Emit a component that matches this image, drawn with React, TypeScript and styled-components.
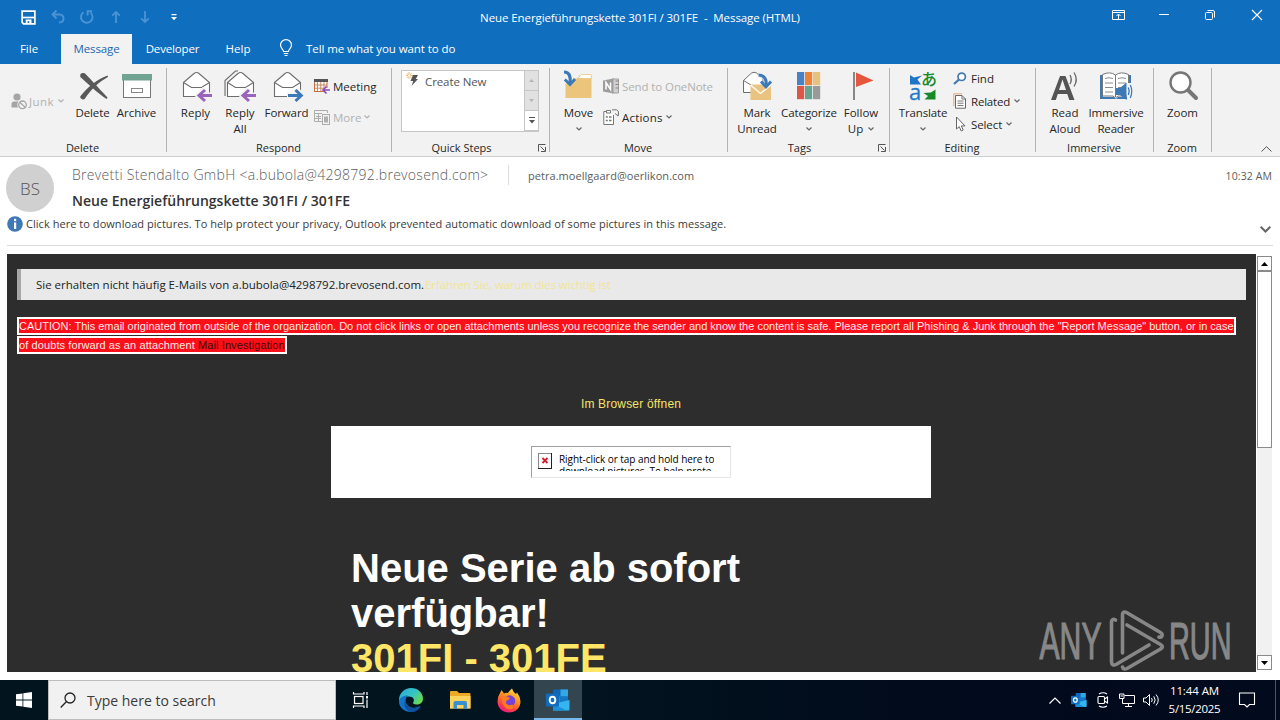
import React from "react";
import styled, { createGlobalStyle } from "styled-components";

const GlobalStyle = createGlobalStyle`
  * { box-sizing: border-box; }
  body {
    margin: 0;
    width: 1280px;
    height: 720px;
    overflow: hidden;
    background: #fff;
    font-family: "Open Sans", "Noto Sans", sans-serif;
  }
  svg { display: block; flex: none; overflow: visible; }
  p, h1, h2 { margin: 0; }
`;

const Screen = styled.div`
  width: 1280px;
  height: 720px;
  display: flex;
  flex-direction: column;
  overflow: hidden;
  background: #fff;
`;

// fs = font size, ls = letter spacing
const Text = styled.span<{ $fs?: number; $ls?: number; $color?: string; $weight?: number }>`
  font-size: ${(p) => p.$fs ?? 11.5}px;
  letter-spacing: ${(p) => p.$ls ?? 0}px;
  color: ${(p) => p.$color ?? "inherit"};
  font-weight: ${(p) => p.$weight ?? 400};
  white-space: pre;
`;

/* ---------- title bar + tabs ---------- */

const TitleBar = styled.header`
  height: 34px;
  display: grid;
  grid-template-columns: 1fr auto 1fr;
  align-items: center;
  background: #106ebe;
  color: #fff;
`;

const QuickAccess = styled.div`
  display: flex;
  padding-left: 14px;
`;

const WindowButtons = styled.div`
  display: flex;
  justify-content: flex-end;
  padding-bottom: 4px;
`;

const Cell = styled.div<{ $w: number }>`
  width: ${(p) => p.$w}px;
  display: flex;
  align-items: center;
  justify-content: center;
`;

const Tabs = styled.nav`
  height: 30px;
  display: flex;
  align-items: stretch;
  background: #106ebe;
  color: #fff;
`;

const Tab = styled.div<{ $w: number; $active?: boolean; $gap?: number }>`
  width: ${(p) => p.$w}px;
  margin-right: ${(p) => p.$gap ?? 0}px;
  padding-bottom: 2px;
  display: flex;
  align-items: center;
  justify-content: center;
  background: ${(p) => (p.$active ? "#f2f2f2" : "transparent")};
  color: ${(p) => (p.$active ? "#1b67b3" : "#fff")};
`;

const TellMe = styled.div`
  display: flex;
  align-items: center;
  gap: 13px;
  padding: 0 0 2px 16px;
`;

/* ---------- ribbon ---------- */

const Ribbon = styled.section`
  height: 93px;
  display: flex;
  background: #f2f2f2;
  border-bottom: 1px solid #cfcfcf;
  color: #262626;
`;

const Group = styled.div<{ $w: number }>`
  width: ${(p) => p.$w}px;
  height: 92px;
  display: flex;
  flex-direction: column;
  padding-top: 6px;
  background: linear-gradient(#b4b4b4, #b4b4b4) right 4px / 1px 84px no-repeat;
`;

const GroupBody = styled.div<{ $left: number }>`
  height: 70px;
  display: flex;
  padding-left: ${(p) => p.$left}px;
`;

const GroupFooter = styled.div`
  height: 16px;
  display: flex;
  align-items: center;
  padding-right: 2px;
  text-align: center;
  line-height: 16px;
`;

const FooterLabel = styled.div`
  flex: 1;
  display: flex;
  justify-content: center;
`;

const LauncherBox = styled.div`
  width: 17px;
  padding-left: 7px;
`;

const BigButton = styled.div<{ $w: number }>`
  width: ${(p) => p.$w}px;
  display: flex;
  flex-direction: column;
  align-items: center;
  line-height: 16px;
  text-align: center;
`;

const IconBox = styled.div`
  height: 35px;
`;

const LabelLine = styled.div`
  height: 16px;
  display: flex;
  align-items: center;
  gap: 5px;
`;

const Stack = styled.div<{ $left: number; $top: number; $step: number }>`
  display: grid;
  grid-auto-rows: ${(p) => p.$step}px;
  align-content: start;
  padding: ${(p) => `${p.$top}px 0 0 ${p.$left}px`};
`;

const SmallButton = styled.div<{ $gap?: number; $w?: number; $off?: boolean }>`
  width: ${(p) => (p.$w ? `${p.$w}px` : "auto")};
  height: 16px;
  display: flex;
  align-items: center;
  gap: ${(p) => p.$gap ?? 3}px;
  color: ${(p) => (p.$off ? "#b1b1b1" : "#262626")};
`;

const Steps = styled.div`
  width: 138px;
  height: 62px;
  display: flex;
  background: #fff;
  border: 1px solid #c6c6c6;
`;

const StepItem = styled.div`
  flex: 1;
  display: flex;
  align-items: flex-start;
  gap: 5px;
  padding: 1px 0 0 4px;
  color: #555;
  line-height: 20px;
`;

const Spinner = styled.div`
  width: 14px;
  display: grid;
  grid-template-rows: 20px 20px 20px;
`;

const SpinnerButton = styled.div<{ $off?: boolean }>`
  display: flex;
  align-items: center;
  justify-content: center;
  background: ${(p) => (p.$off ? "#e1e1e1" : "#fff")};
  border-left: 1px solid #c6c6c6;
  border-bottom: 1px solid #c6c6c6;
`;

const Collapse = styled.div`
  flex: 1;
  display: flex;
  justify-content: flex-end;
  align-items: flex-end;
  padding: 0 8px 4px 0;
`;

/* ---------- message header ---------- */

const MessageHeader = styled.section`
  height: 89px;
  margin: 0 7px;
  border-bottom: 1px solid #dcdcdc;
`;

const HeaderTop = styled.div`
  height: 57px;
  display: flex;
`;

const Avatar = styled.div`
  width: 48px;
  height: 48px;
  margin: 7px 18px 0 -1px;
  border-radius: 50%;
  background: #d0d0d0;
  display: flex;
  align-items: center;
  justify-content: center;
  color: #555;
`;

const HeaderLines = styled.div`
  flex: 1;
`;

const SenderRow = styled.div`
  height: 20px;
  margin-top: 8px;
  display: flex;
  align-items: center;
  color: #5c5c5c;
`;

const SenderName = styled.div`
  width: 437px;
  height: 20px;
  line-height: 18px;
  border-right: 1px solid #dcdcdc;
  margin-right: 19px;
`;

const Time = styled.div`
  margin-left: auto;
  padding: 1px 1px 0 0;
  display: flex;
  line-height: 18px;
`;

const Subject = styled.h2`
  height: 24px;
  line-height: 24px;
  margin-top: 4px;
  font-size: 14px;
`;

const InfoBar = styled.div`
  height: 20px;
  display: flex;
  align-items: center;
  gap: 3px;
  color: #3b3b3b;
`;

const InfoText = styled.div`
  display: flex;
  padding-bottom: 1px;
`;

const InfoChevron = styled.div`
  margin: 10px 2px 0 auto;
`;

/* ---------- message body ---------- */

const Viewer = styled.main`
  height: 418px;
  margin: 8px 7px 8px;
  display: flex;
`;

const Mail = styled.div`
  position: relative;
  width: 1249px;
  height: 418px;
  overflow: hidden;
  background: #2d2d2d;
`;

const Notice = styled.div`
  height: 31px;
  margin: 15px 10px 0;
  padding-left: 15px;
  display: flex;
  align-items: center;
  gap: 1px;
  background: #e9e9e9;
  border-left: 4px solid #a6a6a6;
  color: #222;
`;

const Caution = styled.p`
  margin: 17px 0 0 10px;
  font-family: "Liberation Sans", Arial, sans-serif;
  font-size: 11px;
`;

const CautionLine = styled.span<{ $w: number }>`
  display: block;
  width: ${(p) => p.$w}px;
  height: 18px;
  margin-bottom: 1px;
  line-height: 14px;
  background: #fb0f18;
  border: 2px solid #fff;
  color: #ffe9e9;
  white-space: nowrap;
`;

const Newsletter = styled.div`
  width: 600px;
  margin: 41px 0 0 324px;
  font-family: "Liberation Sans", Arial, sans-serif;
`;

const BrowserLink = styled.div`
  height: 31px;
  line-height: 18px;
  font-size: 12px;
  text-align: center;
  color: #f6e36a;
`;

const Banner = styled.div`
  height: 72px;
  padding-top: 20px;
  background: #fff;
`;

const BlockedImage = styled.div`
  width: 200px;
  height: 32px;
  margin: 0 auto;
  padding: 6px 0 6px 6px;
  display: flex;
  gap: 7px;
  border: 1px solid #e6e6e6;
  border-top-color: #a0a0a0;
  border-left-color: #a0a0a0;
`;

const BlockedText = styled.div`
  height: 18px;
  overflow: hidden;
  font-size: 10px;
  line-height: 12px;
  color: #000;
  font-family: "Open Sans", sans-serif;
`;

const Headline = styled.h1<{ $yellow?: boolean }>`
  padding-left: 20px;
  font-size: 40px;
  line-height: 45px;
  font-weight: 700;
  color: ${(p) => (p.$yellow ? "#ffe666" : "#fff")};
  span { display: block; }
`;

const Spacer = styled.div`
  height: 48px;
`;

const Watermark = styled.div`
  position: absolute;
  left: 1029px;
  top: 354px;
  opacity: 0.75;
`;

const ScrollBar = styled.div`
  width: 15px;
  margin-left: 1px;
  padding: 2px 0;
  display: flex;
  flex-direction: column;
`;

const ScrollArrow = styled.div`
  height: 15px;
  display: flex;
  align-items: center;
  justify-content: center;
  background: #fff;
  border: 1px solid #8a8a8a;
`;

const ScrollThumb = styled.div`
  height: 177px;
  background: #fff;
  border: 1px solid #8a8a8a;
`;

const ScrollTrack = styled.div`
  flex: 1;
  background: #f1f1f1;
`;

/* ---------- taskbar ---------- */

const Taskbar = styled.footer`
  height: 40px;
  display: flex;
  align-items: stretch;
  background: linear-gradient(90deg, #02141d 0%, #02141f 45%, #010b1c 70%, #020a1d 100%);
  color: #fff;
`;

const SearchBox = styled.div`
  width: 288px;
  display: flex;
  align-items: center;
  gap: 11px;
  padding-left: 11px;
  background: #f1f1f1;
  border: 1px solid #bdbdbd;
  color: #3a3a3a;
`;

const TaskButton = styled.div<{ $w: number; $active?: boolean }>`
  width: ${(p) => p.$w}px;
  display: flex;
  align-items: center;
  justify-content: center;
  background: ${(p) => (p.$active ? "#33454f" : "transparent")};
  border-bottom: 2px solid ${(p) => (p.$active ? "#76b9ed" : "transparent")};
  padding-top: 2px;
`;

const Tray = styled.div`
  margin-left: auto;
  display: flex;
  align-items: stretch;
`;

const Clock = styled.div`
  width: 63px;
  display: flex;
  flex-direction: column;
  align-items: center;
  padding-top: 2px;
  line-height: 18px;
`;

const DesktopEdge = styled.div`
  width: 5px;
  margin-left: 8px;
  border-left: 1px solid #4c5560;
`;

/* ---------- icons ---------- */

const Chevron = ({ color = "#666" }: { color?: string }) => (
  <svg width="6" height="4" viewBox="0 0 6 4" fill="none" stroke={color} strokeWidth="1.2">
    <path d="M.5 .5L3 3L5.5 .5" />
  </svg>
);

const Launcher = () => (
  <svg width="8" height="8" viewBox="0 0 8 8" fill="none" stroke="#555">
    <path d="M.5 7.5V.5H7.5M2.5 2.5L6.5 6.5M7.5 3V7.5H3" />
  </svg>
);

const SaveIcon = () => (
  <svg width="15" height="15" viewBox="0 0 16 16" fill="none" stroke="#fff" strokeWidth="1.8">
    <path d="M1.2 1.2H14.8V14.8H2.8L1.2 13.2Z" />
    <path d="M2 8H14" />
    <path d="M5 10.2H11.2V14H8.8V12H7V14H5Z" fill="#fff" stroke="none" />
  </svg>
);

const UndoIcon = () => (
  <svg width="16" height="16" viewBox="0 0 16 16" fill="none" stroke="#4a94d4" strokeWidth="1.9">
    <path d="M6.5 1.5L2.5 5.5L6.5 9.5M2.5 5.5H9.5C15 5.5 15 13.5 9 13.5" />
  </svg>
);

const RedoIcon = () => (
  <svg width="16" height="16" viewBox="0 0 16 16" fill="none" stroke="#4a94d4" strokeWidth="1.9">
    <path d="M4.500 3.200A5.800 5.800 0 1 0 11.500 3.600M8.600 6.500V2.200H13" />
  </svg>
);

const ArrowIcon = ({ down }: { down?: boolean }) => (
  <svg width="12" height="14" viewBox="0 0 12 14" fill="none" stroke="#4a94d4" strokeWidth="1.8">
    <path d={down ? "M6 1V12M2.2 8.3L6 12L9.8 8.3" : "M6 13V2M2.2 5.7L6 2L9.8 5.7"} />
  </svg>
);

const DeleteIcon = () => (
  <svg width="32" height="32" viewBox="0 0 32 32" fill="#595959">
    <path d="M3.3 4.2C5 2.4 7.5 2.8 9 4.4C14 9.5 19.500 15.500 30.500 27.500L29.500 29C20 22.500 10.500 13.500 3.300 7Z" />
    <path d="M30.500 5.500L31 7C22 12 15 18 8 28.600C6.500 30.500 3 29 3.200 26.500C11 17 19 10 30.500 5.500Z" />
  </svg>
);

const ArchiveIcon = () => (
  <svg width="32" height="32" viewBox="0 0 32 32">
    <rect x="2.500" y="9.500" width="27" height="18" fill="#fff" stroke="#777" />
    <rect x="1" y="4" width="30" height="6.500" fill="#70a392" />
    <rect x="10.500" y="18.500" width="11" height="4" fill="#fff" stroke="#888" />
  </svg>
);

const Envelope = () => (
  <g fill="#fff" stroke="#6d6d6d" strokeWidth="1.1">
    <path d="M3.500 12.500L14 3.500Q16.500 1.500 19 3.500L29.500 12.500V26.500H3.500Z" />
    <path d="M3.500 12.500L11.500 17.500H21.500L29.500 12.500" fill="none" />
  </g>
);

const ReplyArrow = () => (
  <g fill="none" strokeLinejoin="miter">
    <path d="M25 19L18.500 25.500L25 32M18.500 25.500H32" stroke="#f2f2f2" strokeWidth="6" />
    <path d="M25 20L19 25.500L25 31M19.500 25.500H32" stroke="#9a64be" strokeWidth="3" />
  </g>
);

const ReplyIcon = () => (
  <svg width="32" height="32" viewBox="0 0 32 32">
    <Envelope />
    <ReplyArrow />
  </svg>
);

const ReplyAllIcon = () => (
  <svg width="32" height="32" viewBox="0 0 32 32">
    <path d="M1 26V10.500L11.500 1H14" fill="none" stroke="#6d6d6d" strokeWidth="1.1" />
    <Envelope />
    <ReplyArrow />
  </svg>
);

const ForwardIcon = () => (
  <svg width="32" height="32" viewBox="0 0 32 32">
    <Envelope />
    <path d="M25 19.500L31 25.500L25 31.500M31 25.500H16" fill="none" stroke="#f2f2f2" strokeWidth="6" />
    <path d="M24.500 20L30.300 25.500L24.500 31M30 25.500H17" fill="none" stroke="#3b79b7" strokeWidth="3" />
  </svg>
);

const JunkIcon = () => (
  <svg width="17" height="17" viewBox="0 0 17 17">
    <circle cx="6" cy="4" r="3.600" fill="#a5a5a5" />
    <path d="M.5 14.500V11Q.5 8.500 3 8.500H9V14.500Z" fill="#a5a5a5" />
    <circle cx="11.500" cy="11.800" r="5.200" fill="#f2f2f2" />
    <circle cx="11.500" cy="11.800" r="3.800" fill="#f2f2f2" stroke="#a5a5a5" strokeWidth="1.300" />
    <path d="M8.800 9.200L14.200 14.400" stroke="#a5a5a5" strokeWidth="1.300" />
  </svg>
);

const MeetingIcon = () => (
  <svg width="16" height="16" viewBox="0 0 16 16" fill="none">
    <rect x=".5" y="2.500" width="12.500" height="11" fill="#fff" stroke="#c2713e" />
    <path d="M0 2.500H14" stroke="#555" strokeWidth="3" />
    <path d="M3.500 4V13M6.800 4V13M10 4V13M1 7H13M1 10.200H13" stroke="#c98860" />
    <path d="M12 8V10H16V14H12V16L8 12Z" fill="#f2f2f2" />
    <path d="M12.500 8.500L9 12L12.500 15.500M9 12H16" stroke="#8a4cb5" strokeWidth="1.700" />
  </svg>
);

const MoreIcon = () => (
  <svg width="16" height="16" viewBox="0 0 16 16" fill="none" stroke="#adadad">
    <path d="M8 12.500H.5V1.500H13.500V4M.5 4.500H8M2 7.500H7M4.500 5V12M.5 9.500H7" />
    <rect x="8.500" y="5.500" width="7" height="10" fill="#f2f2f2" />
    <rect x="10.500" y="8" width="3" height="5" fill="#b0b0b0" />
  </svg>
);

const StepIcon = () => (
  <svg width="14" height="16" viewBox="0 0 14 16">
    <path d="M3 0V7M0 3.500H7M.8 1.200L5.500 6M5.500 1.200L.8 6" stroke="#e9ad58" strokeWidth=".9" />
    <circle cx="3.200" cy="3.600" r="1.200" fill="#fff" />
    <path d="M7 3H12L9.800 7H12L5.500 14L7.300 9H4.500Z" fill="#555" />
  </svg>
);

const Folder = () => (
  <g>
    <path d="M2.500 28V14L11 8.500H14L17 5H28.500V28Z" fill="#ecc57c" />
    <path d="M15 8.500L18 4.500H28L28.800 8.500Z" fill="#fff" stroke="#ecc57c" strokeWidth=".8" />
  </g>
);

const MoveIcon = () => (
  <svg width="32" height="32" viewBox="0 0 32 32">
    <Folder />
    <path d="M1 1.500C7 1.500 8.500 6 7.500 13" fill="none" stroke="#f2f2f2" strokeWidth="5" />
    <path d="M1 2C6.500 2 8 7 7 13" fill="none" stroke="#3b79b7" strokeWidth="3.200" />
    <path d="M1.800 9.500L7 14.500L12 9" fill="none" stroke="#3b79b7" strokeWidth="2.800" />
  </svg>
);

const OneNoteIcon = () => (
  <svg width="16" height="16" viewBox="0 0 16 16">
    <path d="M9 1H15.500V15H9Z" fill="#d0d0d0" stroke="#a0a0a0" />
    <path d="M12.500 3H16M12.500 6.500H16M12.500 10H16" stroke="#888" />
    <path d="M0 2.500L10.500 .5V15.500L0 13.500Z" fill="#9d9d9d" />
    <path d="M3 11.500V4.500L7.500 11.500V4.500" fill="none" stroke="#fff" strokeWidth="1.500" />
  </svg>
);

const ActionsIcon = () => (
  <svg width="16" height="16" viewBox="0 0 16 16" fill="none" stroke="#777">
    <path d="M3.500 2.500H.8V15.500H10.500V6M3.500 1.500H7.500V4H3.500Z" fill="#fff" />
    <path d="M2.800 8H4.800M6 8H8.500M2.800 11.500H4.800M6 11.500H8.500" strokeWidth="1.400" />
    <path d="M9 .8H13.500L15.500 2.500V6.500M12 4.500L15 7L15.500 3.500" />
  </svg>
);

const MarkIcon = () => (
  <svg width="32" height="32" viewBox="0 0 32 32">
    <path d="M2.500 22.500V10.500L10.500 3Q13 1.500 15.500 3L22 9V22.500Z" fill="#fff" stroke="#6d6d6d" />
    <path d="M2.500 10.500L10 15" stroke="#6d6d6d" fill="none" />
    <rect x="9.500" y="14.500" width="20.500" height="15.500" fill="#e9c381" />
    <path d="M9.500 15L19.500 23.500L30 15" fill="none" stroke="#fff" strokeWidth="1.300" />
    <path d="M17 4.500C23.500 4.500 26.500 8 25.500 16" fill="none" stroke="#f2f2f2" strokeWidth="5.500" />
    <path d="M17.500 5C23 5 26 9 25 16" fill="none" stroke="#3b79b7" strokeWidth="3.200" />
    <path d="M20 11.500L25 17L30 11.500" fill="none" stroke="#3b79b7" strokeWidth="2.800" />
  </svg>
);

const categoryColors = ["#4a80c4", "#ee8336", "#e6c27e", "#dc5745", "#67a390", "#9a9a9a"];

const CategorizeIcon = () => (
  <svg width="32" height="32" viewBox="0 0 32 32">
    {categoryColors.map((color, index) => (
      <rect
        key={color}
        x={4 + (index % 3) * 8}
        y={index < 3 ? 2 : 16}
        width="7.200"
        height="13.200"
        fill={color}
      />
    ))}
  </svg>
);

const FlagIcon = () => (
  <svg width="32" height="32" viewBox="0 0 32 32">
    <path d="M9 2V30" stroke="#6d6d6d" strokeWidth="1.600" />
    <path d="M11 2.500L28.500 10.500L11 17Z" fill="#e4573d" />
  </svg>
);

const TranslateIcon = () => (
  <svg width="32" height="32" viewBox="0 0 32 32">
    <path d="M3 5L7 7.500L15 5.500L10.500 9.500L14 14.500H3Z" fill="#1f74c4" />
    <path d="M28.500 29.500H17.500L21 26L16.500 23L24 22.500L28.500 19.500Z" fill="#158a26" />
    <text x="2" y="30" fontFamily="Open Sans, sans-serif" fontSize="22" fill="#1f78c8" stroke="#1f78c8" strokeWidth=".3">a</text>
    <text x="14" y="15" fontFamily="Noto Sans CJK JP, sans-serif" fontSize="16" fontWeight="500" fill="#158a26">あ</text>
  </svg>
);

const FindIcon = () => (
  <svg width="14" height="13" viewBox="0 0 14 13" fill="none" stroke="#4579ad">
    <circle cx="8.700" cy="4.800" r="3.700" strokeWidth="1.700" fill="#fff" />
    <path d="M6 7.500L1 12" strokeWidth="2.300" />
  </svg>
);

const RelatedIcon = () => (
  <svg width="14" height="16" viewBox="0 0 14 16" fill="none">
    <path d="M.8 13V.8H9" stroke="#e8a577" />
    <path d="M2.500 2.500H9L12.500 6V15.200H2.500Z" fill="#fff" stroke="#666" />
    <path d="M9 2.500V6H12.500M4.500 8H10.500M4.500 10.200H10.500M4.500 12.500H10.500" stroke="#777" />
  </svg>
);

const SelectIcon = () => (
  <svg width="14" height="16" viewBox="0 0 14 16">
    <path d="M3.500 1V13L6.200 10.600L8.200 15L10.200 14L8.300 9.900H12Z" fill="#fff" stroke="#666" />
  </svg>
);

const ReadAloudIcon = () => (
  <svg width="32" height="32" viewBox="0 0 32 32">
    <path d="M2 30L11 6H16.500L25.500 30H20.300L18.300 24H8.800L6.800 30ZM10 20H17L13.500 9.500Z" fill="#555" fillRule="evenodd" />
    <path d="M21 5Q23.500 9.500 21 14M25 2.500Q29.500 9.500 25 16.500" fill="none" stroke="#666" strokeWidth="1.300" />
  </svg>
);

const ImmersiveIcon = () => (
  <svg width="32" height="32" viewBox="0 0 32 32">
    <path d="M0 5H3V27H14L16 29L18 27H28V5H31V29H0Z" fill="#3b79b7" />
    <path d="M2.500 4.500Q10 1 15.500 5Q21 1 28.500 4.500V26H18L15.500 28L13 26H2.500Z" fill="#fff" stroke="#777" />
    <path d="M15.500 5V27" stroke="#777" />
    <path d="M5 8.500Q9 7 13 8.500M5 13H13M5 17.500H13M5 22H13M18 8.500Q22 7 26 8.500M18 13H26M18 17.500H22" stroke="#8a8a8a" fill="none" />
    <path d="M27 13H32V30H27Z" fill="#f2f2f2" />
    <path d="M16 18H20L26.500 12.500V30L20 25H16Z" fill="#3b79b7" />
    <path d="M28.300 17.500Q30 21 28.300 25M30.300 15Q33.300 21 30.300 28" stroke="#3b79b7" fill="none" strokeWidth="1.200" />
  </svg>
);

const ZoomIcon = () => (
  <svg width="32" height="32" viewBox="0 0 32 32" fill="none" stroke="#777">
    <circle cx="13.500" cy="12.500" r="10" fill="#fff" strokeWidth="2.400" />
    <path d="M21.500 20.500L29 28" strokeWidth="4" strokeLinecap="round" />
  </svg>
);

const InfoIcon = () => (
  <svg width="16" height="16" viewBox="0 0 16 16">
    <circle cx="8" cy="8" r="7.800" fill="#3f79b5" />
    <rect x="7" y="6.500" width="2.200" height="6.500" fill="#fff" />
    <rect x="7" y="2.800" width="2.200" height="2.300" fill="#fff" />
  </svg>
);

const AnyRunLogo = () => (
  <svg width="200" height="66" viewBox="0 0 200 66">
    <g fill="#a6a6a6" stroke="#a6a6a6" strokeWidth="1.200" fontFamily="Liberation Sans, Arial, sans-serif" fontSize="52">
      <text x="3.500" y="51" textLength="62" lengthAdjust="spacingAndGlyphs">ANY</text>
      <text x="133" y="51" textLength="62.500" lengthAdjust="spacingAndGlyphs">RUN</text>
    </g>
    <g fill="none" stroke="#a6a6a6" strokeWidth="3.600" strokeLinecap="round" strokeLinejoin="round">
      <path d="M79.500 12C77 10.500 75.500 12 75.500 14V54C75.500 57 78 57.500 80 56.500L113 37" />
      <path d="M86.500 45V6.500C86.500 4 88.500 3.500 90.500 4.500L124.500 24.500C127.500 26.500 126 30 123 29" />
      <path d="M91 17L124.500 36.500C127 38 127 39.500 124.500 41L91 60.500C89 61.500 87 61 86.500 59" />
    </g>
  </svg>
);

const OutlookIcon = ({ size = 24 }: { size?: number }) => (
  <svg width={size} height={size} viewBox="0 0 24 24">
    <rect x="7" y="1.500" width="15" height="20" rx="1" fill="#1066b5" />
    <rect x="14.500" y="1.500" width="7.500" height="7" fill="#32a9e7" />
    <rect x="7" y="8.500" width="7.500" height="6" fill="#1b87d6" />
    <rect x="14.500" y="8.500" width="7.500" height="6" fill="#1478c8" />
    <path d="M7 22.500V16L23.500 12V21.500Q23.500 22.500 22.500 22.500Z" fill="#35b5f0" />
    <path d="M7 16L21 22.500H7Z" fill="#1a8fdc" />
    <rect x="0" y="5.500" width="13" height="13" rx="1" fill="#0f6cbf" />
    <ellipse cx="6.500" cy="12" rx="2.800" ry="3.300" fill="none" stroke="#fff" strokeWidth="1.900" />
  </svg>
);

const EdgeIcon = () => (
  <svg width="26" height="26" viewBox="0 0 26 26">
    <defs>
      <linearGradient id="edgeTop" x1="0" y1="0" x2="1" y2=".6">
        <stop offset="0" stopColor="#2aa7df" />
        <stop offset=".6" stopColor="#36c5c0" />
        <stop offset="1" stopColor="#66d956" />
      </linearGradient>
    </defs>
    <path d="M1 13C1 6 6.500 1 13 1C20 1 25 6 25 11.500C25 15.500 22 17.500 18.500 17.500C15.500 17.500 14.500 16.500 15.300 15.300C17 12.500 15 9.500 11 9.500C6 9.500 2 12 1 16Z" fill="url(#edgeTop)" />
    <path d="M1 14C1.500 10.500 6 8 10 8.500C7.500 10 7 14 8.500 17C10.500 21 16 22 22.500 19C20.500 23 17 25 13 25C6 25 .5 20 1 14Z" fill="#1273c9" />
    <path d="M10.500 9.500C7 11 7 16 9.500 19C12.500 22 18 21.500 22.500 19C21 22.500 17.500 25 14.500 25C8.500 24.500 6 20 6.500 16C7 12.500 8.500 10.500 10.500 9.500Z" fill="#0e4f9e" />
  </svg>
);

const ExplorerIcon = () => (
  <svg width="22" height="20" viewBox="0 0 22 20">
    <path d="M1 2Q1 1 2 1H8L10 3H20.500Q21.500 3 21.500 4V18.500H1Z" fill="#eba926" />
    <path d="M1 6H21.500V18.500H1Z" fill="#fcd35d" />
    <path d="M4.500 19V13Q4.500 11 6.500 11H16Q18 11 18 13V19H14.500V15H8V19Z" fill="#3a8fd0" />
  </svg>
);

const FirefoxIcon = () => (
  <svg width="24" height="25" viewBox="0 0 24 25">
    <defs>
      <linearGradient id="fox" x1=".8" y1="0" x2=".3" y2="1">
        <stop offset="0" stopColor="#ffe14a" />
        <stop offset=".45" stopColor="#ff8a1c" />
        <stop offset=".8" stopColor="#fb3a4b" />
        <stop offset="1" stopColor="#e31587" />
      </linearGradient>
    </defs>
    <path d="M3 5L4.500 2L7 5.500Q9 4.500 11 5Q12.500 2.500 15 .5Q16 4 19 6L20 4.500Q23.500 9 23.500 13.500C23.500 20 18.500 24.500 12 24.500S.5 20 .5 13.500Q.5 8.500 3 5Z" fill="url(#fox)" />
    <circle cx="12.500" cy="13" r="5.800" fill="#7542d8" />
    <path d="M5 9Q9 7.500 12 9.500Q14 11 11 12Q8.500 12.500 9 15Q11 18.500 15.500 16.500Q18 21 12 21.500Q4.500 20 5 9Z" fill="#ff7a22" />
  </svg>
);

const TaskViewIcon = () => (
  <svg width="18" height="18" viewBox="0 0 18 18" fill="none" stroke="#fff" strokeWidth="1.200">
    <rect x="2.500" y="5.500" width="8.500" height="7" />
    <path d="M1.500 1V3H12V1M1.500 17V15H12V17M15 1V4M15 8.500V17" />
    <rect x="14" y="5" width="2" height="2.500" fill="#fff" stroke="none" />
  </svg>
);

const WindowsIcon = () => (
  <svg width="16" height="16" viewBox="0 0 16 16" fill="#fff">
    <path d="M0 2.300L6.500 1.400V7.600H0ZM7.300 1.300L16 0V7.600H7.300ZM0 8.400H6.500V14.600L0 13.700ZM7.300 8.400H16V16L7.300 14.700Z" />
  </svg>
);

/* ---------- pieces ---------- */

interface IBigButton {
  width: number;
  icon: React.ReactNode;
  lines: string[];
  chevron?: boolean;
  ls?: number;
}

const RibbonButton = ({ width, icon, lines, chevron, ls = 0 }: IBigButton) => (
  <BigButton $w={width}>
    <IconBox>{icon}</IconBox>
    <LabelLine><Text $ls={ls}>{lines[0]}</Text></LabelLine>
    <LabelLine>
      {lines[1] && <Text $ls={ls}>{lines[1]}</Text>}
      {chevron && <Chevron />}
    </LabelLine>
  </BigButton>
);

const Footer = ({ label, launcher }: { label: string; launcher?: boolean }) => (
  <GroupFooter>
    <FooterLabel><Text $fs={11}>{label}</Text></FooterLabel>
    {launcher && <LauncherBox><Launcher /></LauncherBox>}
  </GroupFooter>
);

export default function App() {
  return (
    <Screen>
      <GlobalStyle />
      <TitleBar>
        <QuickAccess>
          <Cell $w={29}><SaveIcon /></Cell>
          <Cell $w={29}><UndoIcon /></Cell>
          <Cell $w={29}><RedoIcon /></Cell>
          <Cell $w={29}><ArrowIcon /></Cell>
          <Cell $w={29}><ArrowIcon down /></Cell>
          <Cell $w={29}>
            <svg width="6" height="7" viewBox="0 0 6 7" fill="#fff">
              <path d="M.5 0H5.500V1.200H.5ZM0 3H6L3 6.200Z" />
            </svg>
          </Cell>
        </QuickAccess>
        <Text $ls={-0.09}>Neue Energieführungskette 301FI / 301FE  -  Message (HTML)</Text>
        <WindowButtons>
          <Cell $w={46}>
            <svg width="13" height="10" viewBox="0 0 13 10" fill="none" stroke="#fff">
              <path d="M.5 .5H12.500V9.500H.5ZM.5 2.500H12.500M6.500 9V4.500M4.500 6L6.500 4L8.500 6" />
            </svg>
          </Cell>
          <Cell $w={46}>
            <svg width="10" height="10" viewBox="0 0 10 10" stroke="#fff"><path d="M0 4.500H10" /></svg>
          </Cell>
          <Cell $w={46}>
            <svg width="10" height="10" viewBox="0 0 10 10" fill="none" stroke="#fff">
              <rect x=".5" y="2.500" width="7" height="7" rx="1" />
              <path d="M2.500 .5H8Q9.500 .5 9.500 2V7.500" />
            </svg>
          </Cell>
          <Cell $w={47}>
            <svg width="10" height="10" viewBox="0 0 10 10" stroke="#fff" strokeWidth="1.100"><path d="M0 0L10 10M10 0L0 10" /></svg>
          </Cell>
        </WindowButtons>
      </TitleBar>

      <Tabs>
        <Tab $w={58} $gap={3}><Text>File</Text></Tab>
        <Tab $w={71} $active><Text $ls={-0.1}>Message</Text></Tab>
        <Tab $w={81}><Text $ls={-0.15}>Developer</Text></Tab>
        <Tab $w={50}><Text>Help</Text></Tab>
        <TellMe>
          <svg width="14" height="18" viewBox="0 0 14 18" fill="none" stroke="#fff" strokeWidth="1.200">
            <path d="M4.500 12.500C4.500 10.500 1.500 9.500 1.500 6A5.500 5.300 0 0 1 12.500 6C12.500 9.500 9.500 10.500 9.500 12.500ZM4.800 14.500H9.200M5.500 16.500H8.500" />
          </svg>
          <Text $ls={-0.07}>Tell me what you want to do</Text>
        </TellMe>
      </Tabs>

      <Ribbon>
        <Group $w={167}>
          <GroupBody $left={11}>
            <Stack $left={0} $top={23} $step={16}>
              <SmallButton $off $gap={1} $w={59}>
                <JunkIcon />
                <Text $ls={0.4}>Junk </Text>
                <Chevron color="#b1b1b1" />
              </SmallButton>
            </Stack>
            <RibbonButton width={45} icon={<DeleteIcon />} lines={["Delete"]} ls={-0.1} />
            <RibbonButton width={43} icon={<ArchiveIcon />} lines={["Archive"]} />
          </GroupBody>
          <Footer label="Delete" />
        </Group>

        <Group $w={225}>
          <GroupBody $left={6}>
            <RibbonButton width={45} icon={<ReplyIcon />} lines={["Reply"]} />
            <RibbonButton width={44} icon={<ReplyAllIcon />} lines={["Reply", "All"]} />
            <RibbonButton width={49} icon={<ForwardIcon />} lines={["Forward"]} ls={-0.1} />
            <Stack $left={3} $top={8} $step={31}>
              <SmallButton><MeetingIcon /><Text>Meeting</Text></SmallButton>
              <SmallButton $off><MoreIcon /><Text>More</Text><Chevron color="#b1b1b1" /></SmallButton>
            </Stack>
          </GroupBody>
          <Footer label="Respond" />
        </Group>

        <Group $w={158}>
          <GroupBody $left={9}>
            <Steps>
              <StepItem><StepIcon /><Text $ls={-0.1}>Create New</Text></StepItem>
              <Spinner>
                <SpinnerButton $off><svg width="5" height="3" viewBox="0 0 5 3" fill="#b5b5b5"><path d="M0 3H5L2.500 0Z" /></svg></SpinnerButton>
                <SpinnerButton $off><svg width="5" height="3" viewBox="0 0 5 3" fill="#b5b5b5"><path d="M0 0H5L2.500 3Z" /></svg></SpinnerButton>
                <SpinnerButton><svg width="6" height="7" viewBox="0 0 6 7" fill="#555"><path d="M0 0H6V1H0ZM0 3H6L3 6.500Z" /></svg></SpinnerButton>
              </Spinner>
            </Steps>
          </GroupBody>
          <Footer label="Quick Steps" launcher />
        </Group>

        <Group $w={178}>
          <GroupBody $left={8}>
            <RibbonButton width={41} icon={<MoveIcon />} lines={["Move"]} chevron />
            <Stack $left={4} $top={8} $step={31}>
              <SmallButton $off><OneNoteIcon /><Text $ls={-0.1}>Send to OneNote</Text></SmallButton>
              <SmallButton><ActionsIcon /><Text $ls={0.2}>Actions</Text><Chevron /></SmallButton>
            </Stack>
          </GroupBody>
          <Footer label="Move" />
        </Group>

        <Group $w={162}>
          <GroupBody $left={7}>
            <RibbonButton width={44} icon={<MarkIcon />} lines={["Mark", "Unread"]} ls={-0.1} />
            <RibbonButton width={60} icon={<CategorizeIcon />} lines={["Categorize"]} ls={-0.1} chevron />
            <RibbonButton width={44} icon={<FlagIcon />} lines={["Follow", "Up"]} chevron />
          </GroupBody>
          <Footer label="Tags" launcher />
        </Group>

        <Group $w={146}>
          <GroupBody $left={9}>
            <RibbonButton width={48} icon={<TranslateIcon />} lines={["Translate"]} ls={-0.45 / 3} chevron />
            <Stack $left={6} $top={0} $step={23}>
              <SmallButton $gap={4}><FindIcon /><Text>Find</Text></SmallButton>
              <SmallButton $gap={4}><RelatedIcon /><Text $ls={-0.2}>Related</Text><Chevron /></SmallButton>
              <SmallButton $gap={4}><SelectIcon /><Text $ls={-0.1}>Select</Text><Chevron /></SmallButton>
            </Stack>
          </GroupBody>
          <Footer label="Editing" />
        </Group>

        <Group $w={118}>
          <GroupBody $left={7}>
            <RibbonButton width={44} icon={<ReadAloudIcon />} lines={["Read", "Aloud"]} />
            <RibbonButton width={58} icon={<ImmersiveIcon />} lines={["Immersive", "Reader"]} ls={-0.15} />
          </GroupBody>
          <Footer label="Immersive" />
        </Group>

        <Group $w={58}>
          <GroupBody $left={6}>
            <RibbonButton width={45} icon={<ZoomIcon />} lines={["Zoom"]} />
          </GroupBody>
          <Footer label="Zoom" />
        </Group>

        <Collapse>
          <svg width="11" height="6" viewBox="0 0 11 6" fill="none" stroke="#555"><path d="M.5 5.500L5.500 .7L10.500 5.500" /></svg>
        </Collapse>
      </Ribbon>

      <MessageHeader>
        <HeaderTop>
          <Avatar><Text $fs={17} $weight={300}>BS</Text></Avatar>
          <HeaderLines>
            <SenderRow>
              <SenderName>
                <Text $fs={14} $ls={0.29} $weight={300}>Brevetti Stendalto GmbH &lt;a.bubola@4298792.brevosend.com&gt;</Text>
              </SenderName>
              <Text $fs={11} $ls={0.04}>petra.moellgaard@oerlikon.com</Text>
              <Time><Text $fs={10.5} $ls={0.1}>10:32 AM</Text></Time>
            </SenderRow>
            <Subject><Text $fs={14} $weight={600} $color="#333">Neue Energieführungskette 301FI / 301FE</Text></Subject>
          </HeaderLines>
        </HeaderTop>
        <InfoBar>
          <InfoIcon />
          <InfoText>
            <Text $fs={11} $ls={0.045}>Click here to download pictures. To help protect your privacy, Outlook prevented automatic download of some pictures in this message.</Text>
          </InfoText>
          <InfoChevron>
            <svg width="11" height="7" viewBox="0 0 11 7" fill="none" stroke="#666" strokeWidth="2"><path d="M.7 .7L5.500 5.500L10.300 .7" /></svg>
          </InfoChevron>
        </InfoBar>
      </MessageHeader>

      <Viewer>
        <Mail>
          <Notice>
            <Text $ls={-0.01}>Sie erhalten nicht häufig E-Mails von a.bubola@4298792.brevosend.com.</Text>
            <Text $ls={-0.12} $color="#f2e596">Erfahren Sie, warum dies wichtig ist</Text>
          </Notice>
          <Caution>
            <CautionLine $w={1219}>
              <Text $fs={11}>CAUTION: This email originated from outside of the organization. Do not click links or open attachments unless you recognize the sender and know the content is safe. Please report all Phishing &amp; Junk through the "Report Message" button, or in case</Text>
            </CautionLine>
            <CautionLine $w={270}>
              <Text $fs={11} $ls={0.1}>of doubts forward as an attachment </Text>
              <Text $fs={11} $ls={0.1} $color="#3a0a0a">Mail Investigation</Text>
            </CautionLine>
          </Caution>
          <Newsletter>
            <BrowserLink><Text $fs={12} $ls={0.18}>Im Browser öffnen</Text></BrowserLink>
            <Banner>
              <BlockedImage>
                <svg width="14" height="16" viewBox="0 0 14 16">
                  <rect x=".5" y=".5" width="13" height="15" fill="#fff" stroke="#888" />
                  <path d="M0 15.500H14M13.500 0V16" stroke="#222" />
                  <path d="M4.500 5L9.500 10M9.500 5L4.500 10" stroke="#d01f2c" strokeWidth="1.800" />
                </svg>
                <BlockedText>
                  <Text $fs={10} $ls={-0.06}>{"Right-click or tap and hold here to\ndownload pictures. To help prote"}</Text>
                </BlockedText>
              </BlockedImage>
            </Banner>
            <Spacer />
            <Headline>
              <span>Neue Serie ab sofort</span>
              <span>verfügbar!</span>
            </Headline>
            <Headline $yellow>301FI - 301FE</Headline>
          </Newsletter>
          <Watermark><AnyRunLogo /></Watermark>
        </Mail>
        <ScrollBar>
          <ScrollArrow><svg width="7" height="4" viewBox="0 0 7 4"><path d="M0 4H7L3.500 0Z" /></svg></ScrollArrow>
          <ScrollThumb />
          <ScrollTrack />
          <ScrollArrow><svg width="7" height="4" viewBox="0 0 7 4"><path d="M0 0H7L3.500 4Z" /></svg></ScrollArrow>
        </ScrollBar>
      </Viewer>

      <Taskbar>
        <Cell $w={48}><WindowsIcon /></Cell>
        <SearchBox>
          <svg width="16" height="17" viewBox="0 0 16 17" fill="none" stroke="#222" strokeWidth="1.300">
            <circle cx="10" cy="6" r="5" /><path d="M6.300 9.700L.7 15.500" />
          </svg>
          <Text $fs={14}>Type here to search</Text>
        </SearchBox>
        <TaskButton $w={49}><TaskViewIcon /></TaskButton>
        <TaskButton $w={51}><EdgeIcon /></TaskButton>
        <TaskButton $w={47}><ExplorerIcon /></TaskButton>
        <TaskButton $w={51}><FirefoxIcon /></TaskButton>
        <TaskButton $w={48} $active><OutlookIcon /></TaskButton>
        <Tray>
          <Cell $w={24}>
            <svg width="12" height="7" viewBox="0 0 12 7" fill="none" stroke="#fff" strokeWidth="1.200"><path d="M.5 6.500L6 1L11.500 6.500" /></svg>
          </Cell>
          <Cell $w={24}><OutlookIcon size={16} /></Cell>
          <Cell $w={24}>
            <svg width="12" height="16" viewBox="0 0 12 16" fill="none" stroke="#fff" strokeWidth="1.100">
              <rect x="1" y="4.500" width="6.500" height="7" rx="1" />
              <path d="M7.500 7L10.500 5V11L7.500 9M2 2Q6 -.5 10 2M2 14Q6 16.500 10 14" />
            </svg>
          </Cell>
          <Cell $w={24}>
            <svg width="16" height="15" viewBox="0 0 16 15" fill="none" stroke="#fff">
              <path d="M5.500 2.500H15.500V10.500H3.500V6M9.500 10.500V13.500M6 13.500H13M.5 1V5.500H5V1ZM1.500 3H4" />
            </svg>
          </Cell>
          <Cell $w={24}>
            <svg width="17" height="14" viewBox="0 0 17 14" fill="none" stroke="#fff">
              <path d="M.5 5V9H3L6.500 12.500V1.500L3 5ZM8.500 5Q10 7 8.500 9M10.800 3.300Q13.500 7 10.800 10.700M13 1.500Q17.500 7 13 12.500" />
            </svg>
          </Cell>
          <Clock>
            <Text $ls={-0.1}>11:44 AM</Text>
            <Text $ls={-0.3}>5/15/2025</Text>
          </Clock>
          <Cell $w={41}>
            <svg width="16" height="16" viewBox="0 0 16 16" fill="none" stroke="#fff" strokeWidth="1.100">
              <path d="M.5 1H15.500V12.500H10.500L8 15L5.500 12.500H.5Z" />
            </svg>
          </Cell>
          <DesktopEdge />
        </Tray>
      </Taskbar>
    </Screen>
  );
}
